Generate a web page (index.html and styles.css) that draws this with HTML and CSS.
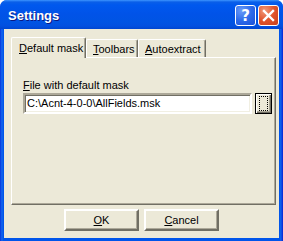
FILE: index.html
```html
<!DOCTYPE html>
<html lang="en">

<head>
  <meta charset="UTF-8">
  <title>Settings</title>
  <link rel="stylesheet" href="styles.css">
</head>

<body>
  <div class="window">
    <div class="titlebar">
      <span class="title">Settings</span>
      <div class="caption-buttons">
        <div class="cap-btn help">?</div>
        <div class="cap-btn close">
          <svg width="13" height="13" viewBox="0 0 13 13">
            <path d="M2 2 L11 11 M11 2 L2 11" stroke="#fff" stroke-width="2.4" stroke-linecap="square" />
          </svg>
        </div>
      </div>
    </div>

    <div class="client">
      <div class="tabs">
        <div class="tab selected"><u>D</u>efault mask</div>
        <div class="tab"><u>T</u>oolbars</div>
        <div class="tab"><u>A</u>utoextract</div>
      </div>

      <div class="panel">
        <div class="label"><u>F</u>ile with default mask</div>
        <div class="file-row">
          <div class="textbox">C:\Acnt-4-0-0\AllFields.msk</div>
          <div class="browse"><span class="focus"></span></div>
        </div>
      </div>

      <div class="buttons">
        <div class="button"><u>O</u>K</div>
        <div class="button"><u>C</u>ancel</div>
      </div>
    </div>
  </div>
</body>

</html>
```

FILE: styles.css
```css
body {
  margin: 0;
  font-family: "Liberation Sans", Arial, sans-serif;
  font-size: 11px;
  color: #000;
}

.window {
  width: 283px;
  height: 241px;
  display: flex;
  flex-direction: column;
  background: linear-gradient(to right, #0831d9 0, #0a4fe8 1px, #166aee 2px, #0055ea 3px, #0055ea 280px, #166aee 281px, #0831d9 282px);
  border-radius: 7px 7px 0 0;
}

.titlebar {
  height: 29px;
  display: flex;
  align-items: center;
  padding: 0 4px 0 8px;
  border-radius: 7px 7px 0 0;
  background: linear-gradient(to bottom, #3d95ff 0, #0a5fe8 2px, #0058ee 5px, #0153e8 14px, #0054e3 22px, #0250e0 26px, #0046d0 29px);
}

.title {
  flex: 1;
  color: #fff;
  font-weight: bold;
  font-size: 13px;
  text-shadow: 1px 1px #0a1883;
  margin-top: 1px;
}

.caption-buttons {
  display: flex;
  gap: 2px;
  margin-top: 2px;
}

.cap-btn {
  width: 19px;
  height: 19px;
  border: 1px solid #fff;
  border-radius: 3px;
  display: flex;
  align-items: center;
  justify-content: center;
  color: #fff;
}

.help {
  background: radial-gradient(circle at 30% 25%, #6b9cf8 0, #2e6bea 50%, #1a50d8 100%);
  font-family: "DejaVu Sans", sans-serif;
  font-weight: bold;
  font-size: 15px;
}

.close {
  background: radial-gradient(circle at 30% 25%, #f29a7a 0, #e0542c 50%, #c8401c 100%);
}

.client {
  flex: 1;
  margin: 0 4px 3px 4px;
  background: #ece9d8;
  padding: 8px 3px 7px 7px;
  display: flex;
  flex-direction: column;
}

.tabs {
  display: flex;
  align-items: flex-end;
  height: 20px;
  position: relative;
  z-index: 1;
}

.tab {
  height: 17px;
  padding: 0 4px 0 6px;
  line-height: 18px;
  border: 1px solid #fff;
  border-bottom: none;
  border-right: 1px solid #716f64;
  box-shadow: inset -1px 0 #aca899;
  border-radius: 2px 2px 0 0;
  background: #ece9d8;
  margin-bottom: 0;
}

.tab.selected {
  height: 20px;
  width: 66px;
  padding: 0 0 0 7px;
  line-height: 20px;
  margin-bottom: -1px;
}

.tab:nth-child(2) {
  width: 40px;
}

.panel {
  flex: 1;
  border: 1px solid #fff;
  border-right-color: #716f64;
  border-bottom-color: #716f64;
  box-shadow: inset -1px -1px #aca899;
  padding: 20px 3px 0 11px;
}

.label {
  line-height: 14px;
}

.file-row {
  display: flex;
  gap: 3px;
  margin-top: 1px;
}

.textbox {
  width: 225px;
  height: 17px;
  line-height: 17px;
  padding-left: 2px;
  background: #fff;
  border: 2px solid;
  border-color: #aca899 #fff #fff #aca899;
  box-shadow: inset 1px 1px #716f64, inset -1px -1px #f1efe2;
  box-sizing: content-box;
}

.browse {
  width: 15px;
  height: 19px;
  border: 1px solid #000;
  box-shadow: inset 1px 1px #fff, inset -1px -1px #716f64, inset -2px -2px #aca899;
  display: flex;
  align-items: center;
  justify-content: center;
}

.browse .focus {
  width: 7px;
  height: 13px;
  border: 1px dotted #000;
}

.buttons {
  display: flex;
  justify-content: center;
  gap: 5px;
  margin-top: 4px;
  padding-right: 4px;
}

.button {
  width: 71px;
  height: 18px;
  line-height: 18px;
  text-align: center;
  border: 2px solid;
  border-color: #fff #716f64 #716f64 #fff;
  box-shadow: inset -1px -1px #aca899;
}
```
